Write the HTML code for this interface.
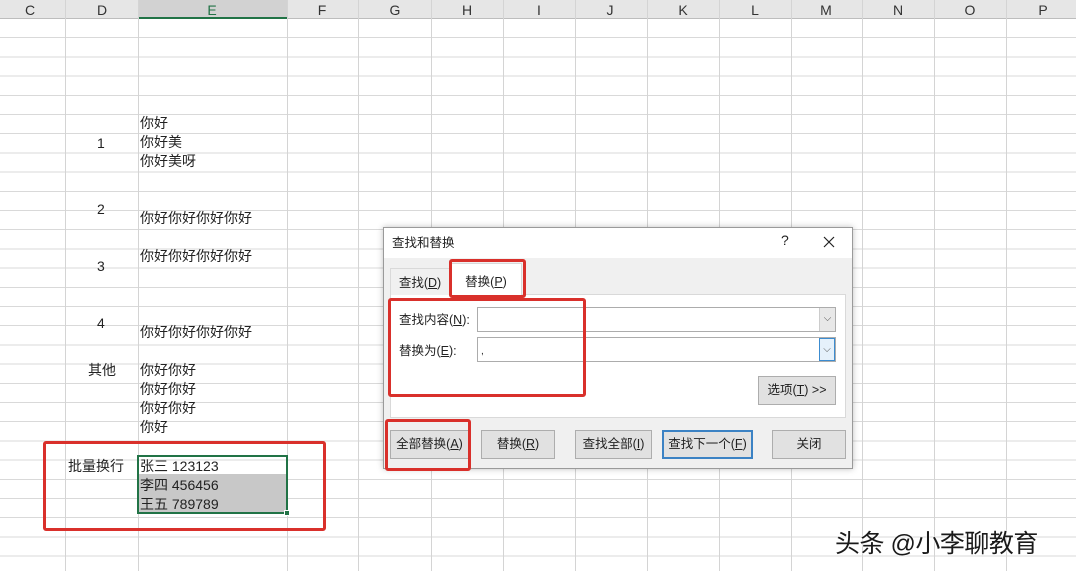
<!DOCTYPE html>
<html><head><meta charset="utf-8"><style>
*{margin:0;padding:0;box-sizing:border-box}
body{width:1076px;height:571px;overflow:hidden;background:#fff;position:relative;font-family:"Liberation Sans","Noto Sans CJK SC",sans-serif;color:#222}
.grid{position:absolute;left:0;top:19px;width:1076px;height:552px;
background-image:repeating-linear-gradient(to bottom,transparent 0,transparent 18.2px,#d9d9d9 18.2px,#d9d9d9 19.2px)}
.v{position:absolute;top:0;width:1px;height:571px;background:#d4d4d4}
.hdr{position:absolute;left:0;top:0;width:1076px;height:19px;background:#e6e6e6;border-bottom:1px solid #bdbdbd}
.hl{position:absolute;top:2px;font-size:14px;color:#333;transform:translateX(-50%)}
.t{position:absolute;font-size:14px;color:#222;line-height:19px;white-space:nowrap}
.red{position:absolute;border:3px solid #d9302b;border-radius:3px}
.dlg{position:absolute;left:383px;top:227px;width:470px;height:242px;background:#f0f0f0;border:1px solid #9a9a9a;box-shadow:0 0 6px rgba(0,0,0,.25)}
.btn{position:absolute;height:29px;background:#e1e1e1;border:1px solid #adadad;font-size:12.5px;text-align:center;line-height:27px;color:#222}
.inp{position:absolute;background:#fff;border:1px solid #acacac;height:25px}
.dd{position:absolute;right:0;top:0;width:16px;height:23px;background:#e8e8e8;border-left:1px solid #ccc;font-size:10px;text-align:center;line-height:22px;color:#555}
</style></head><body>
<div class="grid"></div>
<div class="hdr"></div>
<div style="position:absolute;left:138px;top:0;width:149px;height:19px;background:#d2d2d2;border-bottom:2px solid #217346"></div>
<div class="v" style="left:65px"></div><div class="v" style="left:138px"></div><div class="v" style="left:287px"></div><div class="v" style="left:358px"></div><div class="v" style="left:431px"></div><div class="v" style="left:503px"></div><div class="v" style="left:575px"></div><div class="v" style="left:647px"></div><div class="v" style="left:719px"></div><div class="v" style="left:791px"></div><div class="v" style="left:862px"></div><div class="v" style="left:934px"></div><div class="v" style="left:1006px"></div>
<span class="hl" style="left:30px">C</span><span class="hl" style="left:102px">D</span><span class="hl" style="left:212px;color:#217346">E</span><span class="hl" style="left:322px">F</span><span class="hl" style="left:395px">G</span><span class="hl" style="left:467px">H</span><span class="hl" style="left:539px">I</span><span class="hl" style="left:610px">J</span><span class="hl" style="left:683px">K</span><span class="hl" style="left:755px">L</span><span class="hl" style="left:826px">M</span><span class="hl" style="left:898px">N</span><span class="hl" style="left:970px">O</span><span class="hl" style="left:1043px">P</span>

<div style="position:absolute;left:138px;top:474px;width:149px;height:39px;background:#c8c8c8"></div>
<div style="position:absolute;left:137px;top:455px;width:151px;height:59px;border:2px solid #217346"></div>
<div style="position:absolute;left:284px;top:510px;width:6px;height:6px;background:#217346;border:1px solid #fff"></div>

<div class="t" style="left:140px;top:114px">你好</div>
<div class="t" style="left:140px;top:133px">你好美</div>
<div class="t" style="left:140px;top:152px">你好美呀</div>
<div class="t" style="left:97px;top:134px">1</div>
<div class="t" style="left:97px;top:200px">2</div>
<div class="t" style="left:140px;top:209px">你好你好你好你好</div>
<div class="t" style="left:140px;top:247px">你好你好你好你好</div>
<div class="t" style="left:97px;top:257px">3</div>
<div class="t" style="left:97px;top:314px">4</div>
<div class="t" style="left:140px;top:323px">你好你好你好你好</div>
<div class="t" style="left:88px;top:361px">其他</div>
<div class="t" style="left:140px;top:361px">你好你好</div>
<div class="t" style="left:140px;top:380px">你好你好</div>
<div class="t" style="left:140px;top:399px">你好你好</div>
<div class="t" style="left:140px;top:418px">你好</div>
<div class="t" style="left:68px;top:457px">批量换行</div>
<div class="t" style="left:140px;top:457px">张三 123123</div>
<div class="t" style="left:140px;top:476px">李四 456456</div>
<div class="t" style="left:140px;top:495px">王五 789789</div>
<div class="red" style="left:43px;top:441px;width:283px;height:90px"></div>

<div class="dlg">
 <div style="position:absolute;left:0;top:0;width:468px;height:30px;background:#fff"></div>
 <div style="position:absolute;left:8px;top:4px;font-size:12.5px">查找和替换</div>
 <div style="position:absolute;left:397px;top:4px;font-size:14px">?</div>
 <svg style="position:absolute;left:439px;top:8px" width="12" height="12"><path d="M1 1L11 11M11 1L1 11" stroke="#222" stroke-width="1.2"/></svg>
 <div style="position:absolute;left:6px;top:66px;width:456px;height:124px;background:#fff;border:1px solid #d9d9d9"></div>
 <div style="position:absolute;left:6px;top:40px;width:60px;height:27px;background:#f0f0f0;border:1px solid #d9d9d9;border-bottom:none;font-size:12.5px;text-align:center;line-height:28px">查找(<u>D</u>)</div>
 <div style="position:absolute;left:66px;top:35px;width:72px;height:33px;background:#fff;border:1px solid #d9d9d9;border-bottom:none;font-size:12.5px;text-align:center;line-height:36px">替换(<u>P</u>)</div>
 <div style="position:absolute;left:15px;top:81px;font-size:12.5px">查找内容(<u>N</u>):</div>
 <div style="position:absolute;left:15px;top:112px;font-size:12.5px">替换为(<u>E</u>):</div>
 <div class="inp" style="left:93px;top:79px;width:359px"><div class="dd">⌵</div></div>
 <div class="inp" style="left:93px;top:109px;width:359px"><div class="dd" style="border:1px solid #3c8cd0;background:#e5f1fb">⌵</div><span style="position:absolute;left:3px;top:8px;font-size:10px">,</span></div>
 <div class="btn" style="left:374px;top:148px;width:78px">选项(<u>T</u>) &gt;&gt;</div>
 <div class="btn" style="left:6px;top:202px;width:79px">全部替换(<u>A</u>)</div>
 <div class="btn" style="left:97px;top:202px;width:74px">替换(<u>R</u>)</div>
 <div class="btn" style="left:191px;top:202px;width:77px">查找全部(<u>I</u>)</div>
 <div class="btn" style="left:278px;top:202px;width:91px;border:2px solid #3b82c4;line-height:25px">查找下一个(<u>F</u>)</div>
 <div class="btn" style="left:388px;top:202px;width:74px">关闭</div>
</div>
<div class="red" style="left:449px;top:259px;width:77px;height:39px"></div>
<div class="red" style="left:388px;top:298px;width:198px;height:99px"></div>
<div class="red" style="left:385px;top:419px;width:86px;height:52px"></div>

<div style="position:absolute;left:835px;top:524px;font-size:25px;color:#1a1a1a;letter-spacing:-0.5px;text-shadow:0 0 2px #fff,0 0 2px #fff;white-space:nowrap">头条 @小李聊教育</div>
</body></html>
